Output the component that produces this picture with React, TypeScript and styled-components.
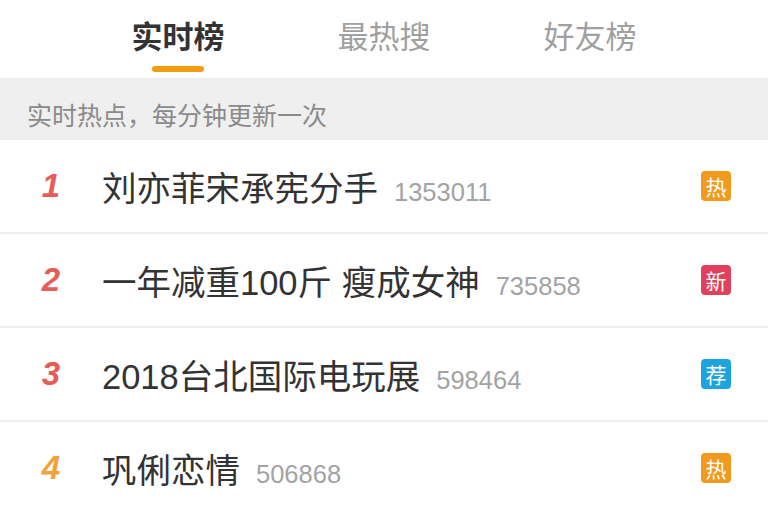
import styled, { createGlobalStyle } from "styled-components";

const GlobalStyle = createGlobalStyle`
  html, body {
    margin: 0;
    padding: 0;
    background: #ffffff;
  }
  body {
    font-family: "Noto Sans CJK SC", "Noto Sans", sans-serif;
    overflow: hidden;
  }
`;

const Page = styled.div`
  width: 768px;
  height: 510px;
  overflow: hidden;
  background: #fff;
`;

const TabBar = styled.div`
  display: flex;
  justify-content: center;
  height: 78px;
  box-sizing: border-box;
  padding-top: 13px;
`;

const Tab = styled.div<{ $active?: boolean }>`
  width: 206px;
  display: flex;
  flex-direction: column;
  align-items: center;
  font-size: 31px;
  line-height: 44px;
  font-weight: ${(p) => (p.$active ? 700 : 400)};
  color: ${(p) => (p.$active ? "#333333" : "#a0a0a0")};
`;

const Indicator = styled.div`
  width: 52px;
  height: 6px;
  margin-top: 9px;
  border-radius: 3px;
  background: #f39c12;
`;

const Notice = styled.div`
  height: 62px;
  box-sizing: border-box;
  padding: 18px 0 0 27px;
  background: #efefef;
  font-size: 25px;
  line-height: 36px;
  color: #8a8a8a;
`;

const Row = styled.div`
  display: flex;
  align-items: center;
  height: 94px;
  box-sizing: border-box;
  border-bottom: 2px solid #ededed;
`;

const Rank = styled.div<{ $color: string }>`
  width: 102px;
  text-align: center;
  font-family: "Liberation Sans", Arial, sans-serif;
  font-style: italic;
  font-weight: 700;
  font-size: 33px;
  color: ${(p) => p.$color};
`;

const Title = styled.div`
  font-family: "Liberation Sans", "Noto Sans CJK SC", sans-serif;
  font-size: 34.5px;
  color: #333333;
  white-space: nowrap;
`;

const Count = styled.span`
  margin-left: 16px;
  font-family: "Liberation Sans", Arial, sans-serif;
  font-size: 25.5px;
  color: #a3a3a3;
`;

const Badge = styled.div<{ $color: string }>`
  margin-left: auto;
  margin-right: 37px;
  width: 30px;
  height: 30px;
  border-radius: 4px;
  background: ${(p) => p.$color};
  color: #fff;
  font-size: 21px;
  line-height: 30px;
  text-align: center;
`;

const items = [
  { rank: 1, title: "刘亦菲宋承宪分手", count: "1353011", badge: "热" },
  { rank: 2, title: "一年减重100斤 瘦成女神", count: "735858", badge: "新" },
  { rank: 3, title: "2018台北国际电玩展", count: "598464", badge: "荐" },
  { rank: 4, title: "巩俐恋情", count: "506868", badge: "热" },
];

const badgeColors: Record<string, string> = {
  热: "#f19a1e",
  新: "#e0405b",
  荐: "#1ea4dc",
};

export default function App() {
  return (
    <Page>
      <GlobalStyle />
      <TabBar>
        <Tab $active>
          实时榜
          <Indicator />
        </Tab>
        <Tab>最热搜</Tab>
        <Tab>好友榜</Tab>
      </TabBar>
      <Notice>实时热点，每分钟更新一次</Notice>
      {items.map((item) => (
        <Row key={item.rank}>
          <Rank $color={item.rank <= 3 ? "#e65c57" : "#f0a33a"}>{item.rank}</Rank>
          <Title>
            {item.title}
            <Count>{item.count}</Count>
          </Title>
          <Badge $color={badgeColors[item.badge]}>{item.badge}</Badge>
        </Row>
      ))}
    </Page>
  );
}
